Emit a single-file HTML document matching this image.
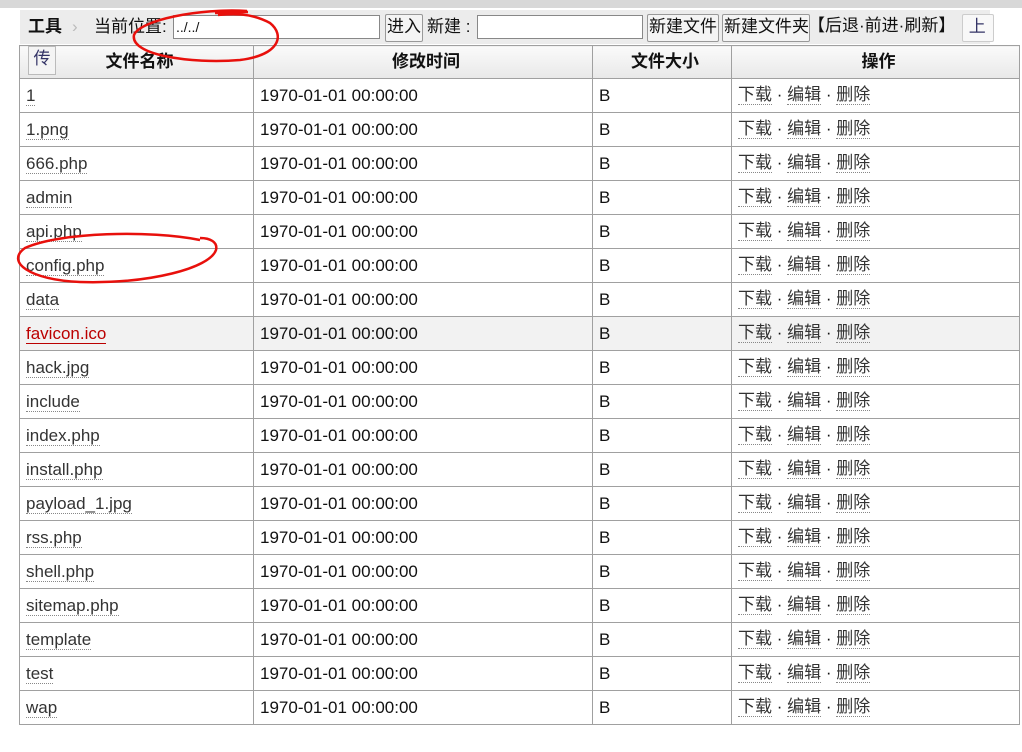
<!DOCTYPE html>
<html><head><meta charset="utf-8">
<style>
body{margin:0;width:1022px;height:752px;background:#fff;font-family:"Liberation Sans","Noto Sans CJK SC",sans-serif;position:relative;overflow:hidden;color:#111}
.top{position:absolute;left:0;top:0;width:1022px;height:8px;background:#d8d8d8}
.tb{position:absolute;left:20px;top:10px;width:970px;height:34px;background:#ececec;font-size:17px}
.tb span{position:absolute;line-height:20px}
.btn{height:26px;top:4px;border:1px solid #999;border-radius:2px;background:#f4f4f4;font-size:17px;padding:0 1px;line-height:24px;overflow:hidden;white-space:nowrap}
.inp{height:22px;top:5px;border:1px solid #888;background:#fff;padding:0 2px;font-size:14px;line-height:22px}
table{position:absolute;left:19px;top:45px;border-collapse:collapse;width:1001px;font-size:17px}
td,th{border:1px solid #a0a0a0;height:34px;padding:0 0 0 6px;text-align:left;box-sizing:border-box;line-height:20px;vertical-align:middle}
th{background:linear-gradient(#fafafa,#e8e8e8);text-align:center;font-weight:bold;height:33px}
a{color:#333;text-decoration:none;border-bottom:1px dotted #888}
td:last-child span{position:relative;top:-1px}
tr.h td{background:#f2f2f2}
tr.h td:first-child a{color:#b00;border-bottom:1px solid #b00}
</style></head><body>
<div class="top"></div>
<div class="tb">
<span style="left:8px;top:7px;font-weight:bold">工具</span>
<span style="left:52px;top:7px;color:#bbb">›</span>
<span style="left:74px;top:7px">当前位置:</span>
<div class="inp" style="position:absolute;left:153px;width:201px">../../</div>
<div class="btn" style="position:absolute;left:365px;width:34px">进入</div>
<span style="left:407px;top:7px">新建 :</span>
<div class="inp" style="position:absolute;left:457px;width:160px"></div>
<div class="btn" style="position:absolute;left:627px;width:68px">新建文件</div>
<div class="btn" style="position:absolute;left:702px;width:84px">新建文件夹</div>
<span style="left:788px;top:6px">【后退·前进·刷新】</span>
<div class="btn" style="position:absolute;left:942px;width:28px;color:#336;border-color:#ccc;background:#f8f8f8">&nbsp;上</div>
</div>
<table>
<tr><th style="width:234px;position:relative"><span style="position:absolute;left:8px;top:0;width:26px;height:27px;border:1px solid #bbb;background:#f4f4f4;font-weight:normal;color:#336;font-size:17px;line-height:24px">传</span>文件名称</th><th style="width:339px">修改时间</th><th style="width:139px">文件大小</th><th>操作</th></tr>
<tr><td><a>1</a></td><td>1970-01-01 00:00:00</td><td>B</td><td><span><a>下载</a> · <a>编辑</a> · <a>删除</a></span></td></tr>
<tr><td><a>1.png</a></td><td>1970-01-01 00:00:00</td><td>B</td><td><span><a>下载</a> · <a>编辑</a> · <a>删除</a></span></td></tr>
<tr><td><a>666.php</a></td><td>1970-01-01 00:00:00</td><td>B</td><td><span><a>下载</a> · <a>编辑</a> · <a>删除</a></span></td></tr>
<tr><td><a>admin</a></td><td>1970-01-01 00:00:00</td><td>B</td><td><span><a>下载</a> · <a>编辑</a> · <a>删除</a></span></td></tr>
<tr><td><a>api.php</a></td><td>1970-01-01 00:00:00</td><td>B</td><td><span><a>下载</a> · <a>编辑</a> · <a>删除</a></span></td></tr>
<tr><td><a>config.php</a></td><td>1970-01-01 00:00:00</td><td>B</td><td><span><a>下载</a> · <a>编辑</a> · <a>删除</a></span></td></tr>
<tr><td><a>data</a></td><td>1970-01-01 00:00:00</td><td>B</td><td><span><a>下载</a> · <a>编辑</a> · <a>删除</a></span></td></tr>
<tr class="h"><td><a>favicon.ico</a></td><td>1970-01-01 00:00:00</td><td>B</td><td><span><a>下载</a> · <a>编辑</a> · <a>删除</a></span></td></tr>
<tr><td><a>hack.jpg</a></td><td>1970-01-01 00:00:00</td><td>B</td><td><span><a>下载</a> · <a>编辑</a> · <a>删除</a></span></td></tr>
<tr><td><a>include</a></td><td>1970-01-01 00:00:00</td><td>B</td><td><span><a>下载</a> · <a>编辑</a> · <a>删除</a></span></td></tr>
<tr><td><a>index.php</a></td><td>1970-01-01 00:00:00</td><td>B</td><td><span><a>下载</a> · <a>编辑</a> · <a>删除</a></span></td></tr>
<tr><td><a>install.php</a></td><td>1970-01-01 00:00:00</td><td>B</td><td><span><a>下载</a> · <a>编辑</a> · <a>删除</a></span></td></tr>
<tr><td><a>payload_1.jpg</a></td><td>1970-01-01 00:00:00</td><td>B</td><td><span><a>下载</a> · <a>编辑</a> · <a>删除</a></span></td></tr>
<tr><td><a>rss.php</a></td><td>1970-01-01 00:00:00</td><td>B</td><td><span><a>下载</a> · <a>编辑</a> · <a>删除</a></span></td></tr>
<tr><td><a>shell.php</a></td><td>1970-01-01 00:00:00</td><td>B</td><td><span><a>下载</a> · <a>编辑</a> · <a>删除</a></span></td></tr>
<tr><td><a>sitemap.php</a></td><td>1970-01-01 00:00:00</td><td>B</td><td><span><a>下载</a> · <a>编辑</a> · <a>删除</a></span></td></tr>
<tr><td><a>template</a></td><td>1970-01-01 00:00:00</td><td>B</td><td><span><a>下载</a> · <a>编辑</a> · <a>删除</a></span></td></tr>
<tr><td><a>test</a></td><td>1970-01-01 00:00:00</td><td>B</td><td><span><a>下载</a> · <a>编辑</a> · <a>删除</a></span></td></tr>
<tr><td><a>wap</a></td><td>1970-01-01 00:00:00</td><td>B</td><td><span><a>下载</a> · <a>编辑</a> · <a>删除</a></span></td></tr>
</table>
<svg width="1022" height="752" style="position:absolute;left:0;top:0;pointer-events:none">
<g fill="none" stroke="#e8100c" stroke-width="2.5">
<path d="M215,13 L248,12 M247,11 C200,8 140,20 134,35 C130,55 190,64 240,60 C280,55 285,35 270,23 C250,12 230,14 218,15"/>
<path d="M200,240 C150,230 60,232 25,248 C5,262 30,280 80,282 C150,284 210,268 216,250 C218,242 210,238 200,238"/>
</g></svg>
</body></html>
